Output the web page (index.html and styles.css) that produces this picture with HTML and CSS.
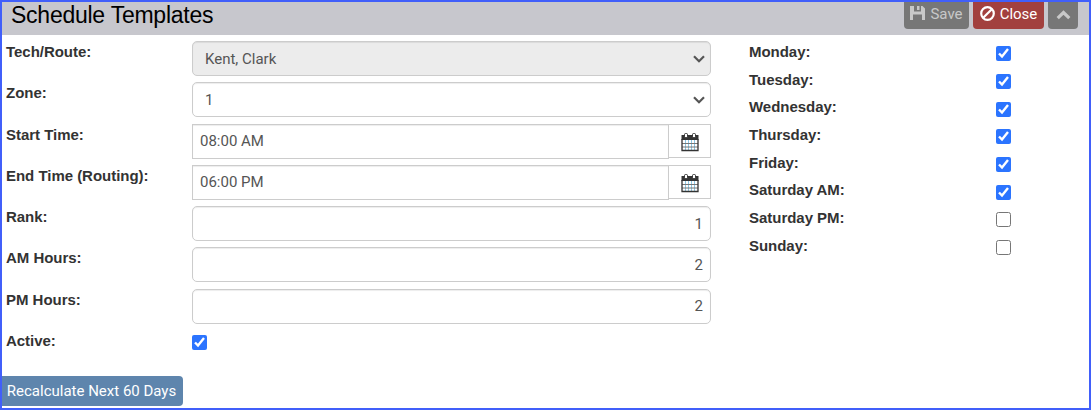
FILE: index.html
```html
<!DOCTYPE html>
<html lang="en">
<head>
	<meta charset="utf-8">
	<title>Schedule Templates</title>
	<link rel="stylesheet" href="styles.css">
</head>
<body>
<form class="panel">
	<div class="header">
		<h1>Schedule Templates</h1>
		<div class="buttons">
			<button type="button" class="btn save" disabled>
				<svg width="15" height="15" viewBox="0 0 15 15"><path fill="currentColor" fill-rule="evenodd" d="M0 0h4v5.500h7V0h1.500L15 2.500V14h-3V8.500H3V14H0zM7 0h2.500v4H7z"/></svg>
				<span>Save</span>
			</button>
			<button type="button" class="btn close">
				<svg width="15" height="15" viewBox="0 0 15 15"><g fill="none" stroke="currentColor" stroke-width="2.200"><circle cx="7.500" cy="7.500" r="6.300"/><path d="M3.200 11.800l8.600-8.600"/></g></svg>
				<span>Close</span>
			</button>
			<button type="button" class="btn collapse">
				<svg width="15" height="10" viewBox="0 0 15 10"><path fill="none" stroke="currentColor" stroke-width="3.200" d="M1.700 8.200l5.800-5.700 5.800 5.700"/></svg>
			</button>
		</div>
	</div>
	<div class="content">
		<div class="fields">
			<div class="row">
				<label for="tech">Tech/Route:</label>
				<div class="select">
					<select id="tech" class="control" disabled><option>Kent, Clark</option></select>
					<svg class="arrow" width="12" height="8" viewBox="0 0 12 8"><path d="M1 1.200l5 5 5-5"/></svg>
				</div>
			</div>
			<div class="row">
				<label for="zone">Zone:</label>
				<div class="select">
					<select id="zone" class="control"><option>1</option></select>
					<svg class="arrow" width="12" height="8" viewBox="0 0 12 8"><path d="M1 1.200l5 5 5-5"/></svg>
				</div>
			</div>
			<div class="row">
				<label for="start">Start Time:</label>
				<div class="group">
					<input id="start" class="control" type="text" value="08:00 AM">
					<span class="addon"><svg width="18" height="19" viewBox="0 0 18 19"><use href="#calendar"/></svg></span>
				</div>
			</div>
			<div class="row">
				<label for="end">End Time (Routing):</label>
				<div class="group">
					<input id="end" class="control" type="text" value="06:00 PM">
					<span class="addon"><svg width="18" height="19" viewBox="0 0 18 19"><use href="#calendar"/></svg></span>
				</div>
			</div>
			<div class="row">
				<label for="rank">Rank:</label>
				<input id="rank" class="control number" type="text" value="1">
			</div>
			<div class="row">
				<label for="am">AM Hours:</label>
				<input id="am" class="control number" type="text" value="2">
			</div>
			<div class="row">
				<label for="pm">PM Hours:</label>
				<input id="pm" class="control number" type="text" value="2">
			</div>
			<div class="row">
				<label for="active">Active:</label>
				<input id="active" type="checkbox" checked>
			</div>
		</div>
		<div class="days">
			<div class="day"><label for="mon">Monday:</label><input id="mon" type="checkbox" checked></div>
			<div class="day"><label for="tue">Tuesday:</label><input id="tue" type="checkbox" checked></div>
			<div class="day"><label for="wed">Wednesday:</label><input id="wed" type="checkbox" checked></div>
			<div class="day"><label for="thu">Thursday:</label><input id="thu" type="checkbox" checked></div>
			<div class="day"><label for="fri">Friday:</label><input id="fri" type="checkbox" checked></div>
			<div class="day"><label for="satam">Saturday AM:</label><input id="satam" type="checkbox" checked></div>
			<div class="day"><label for="satpm">Saturday PM:</label><input id="satpm" type="checkbox"></div>
			<div class="day"><label for="sun">Sunday:</label><input id="sun" type="checkbox"></div>
		</div>
	</div>
	<button type="button" class="btn recalc">Recalculate Next 60 Days</button>
</form>
<svg class="defs" width="0" height="0">
	<symbol id="calendar" viewBox="0 0 18 19">
		<path fill="#fff" d="M1 3h16v14.500H1z"/>
		<path fill="#333" d="M.500 2h17v5H.500z"/>
		<path fill="none" stroke="#8cc8e4" d="M4.500 7v10M7.500 7v10M10.500 7v10M13.500 7v10"/>
		<path fill="none" stroke="#777" d="M1 10.500h16M1 14h16"/>
		<path fill="none" stroke="#333" stroke-width="1.300" d="M1 6v11.500h16V6"/>
		<rect x="3.500" y=".500" width="3" height="4" rx="1" fill="#fff" stroke="#333"/>
		<rect x="11.500" y=".500" width="3" height="4" rx="1" fill="#fff" stroke="#333"/>
	</symbol>
</svg>
</body>
</html>
```

FILE: styles.css
```css
* { box-sizing: border-box; }
body { margin: 0; background: #fff; font-family: Roboto, sans-serif; font-size: 15px; color: #333; }
.panel { height: 410px; border: 2px solid #415ffa; overflow: hidden; }
.header { display: flex; justify-content: space-between; height: 33px; padding: 0 11px 0 9px; background: #c7c7cd; }
h1 { margin: 0; font: 23px/26px "Liberation Sans", Arial, sans-serif; letter-spacing: -.25px; color: #000; }
.buttons { display: flex; gap: 4px; }
.btn { display: flex; align-items: center; justify-content: center; border: 0; border-radius: 4px; padding: 0; font: 15px/20px Roboto, sans-serif; color: #fff; }
.buttons .btn { height: 27px; gap: 5px; padding-bottom: 3px; border-radius: 0 0 4px 4px; }
.save { width: 65px; background: #777; }
.save svg, .close svg { margin-bottom: 1px; }
.save, .collapse { color: #c8c8c8; }
.close { width: 71px; background: #a2403e; }
.buttons .collapse { width: 30px; padding: 0 0 2px; background: #777; }
.content { display: flex; height: 336px; }
.fields { width: 709px; padding-top: 6px; }
.row { display: grid; grid-template-columns: 186px 519px; height: 41.25px; padding-left: 4px; align-items: start; }
label { padding-top: 1px; font: bold 15px/20px "Liberation Sans", Arial, sans-serif; letter-spacing: -.03px; }
.control { display: block; width: 100%; height: 35px; margin: 0; padding: 0 7px; border: 1px solid #ccc; border-radius: 5px; background: #fff; box-shadow: inset 0 1px 1px rgba(0, 0, 0, .075); font: 15px Roboto, sans-serif; color: #555; }
.select { position: relative; }
.select .control { appearance: none; padding-left: 12px; opacity: 1; }
.select .control:disabled { background: #ececec; }
.arrow { position: absolute; right: 6px; top: 14px; fill: none; stroke: #555; stroke-width: 2.2; }
.group { display: flex; align-items: flex-start; }
.group .control { width: 477px; border-radius: 0; padding-bottom: 1px; }
.addon { display: flex; align-items: center; justify-content: center; width: 42px; height: 34px; padding-top: 3px; border: 1px solid #ccc; border-left: 0; }
.number { text-align: right; }
input[type=checkbox] { width: 15px; height: 15px; margin: 5px 0 0; accent-color: #2b74ff; }
.days { padding: 7px 0 0 38px; }
.day { display: grid; grid-template-columns: 247px 15px; height: 27.7px; align-items: start; }
.day label { padding-top: 0; }
.day input[type=checkbox] { margin-top: 4.2px; }
.recalc { width: 181px; height: 30px; margin-top: 5px; padding-right: 2px; border-radius: 0 4px 4px 0; background: #5e85ad; }
.defs { display: block; }
```
